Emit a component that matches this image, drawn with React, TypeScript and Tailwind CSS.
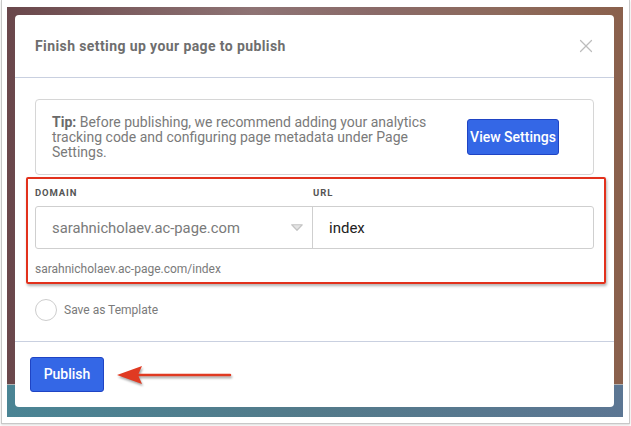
import { X } from 'lucide-react';

const font = { fontFamily: 'Roboto, "Liberation Sans", sans-serif' };

function Arrow() {
  return (
    <svg width="120" height="24" viewBox="0 0 120 24" className="drop-shadow-[1px_2px_1px_rgba(0,0,0,0.35)]">
      <path d="M14 12 L114 12" stroke="#e03a22" strokeWidth="2.5" strokeLinecap="round" />
      <path d="M1 12 L26 3 L22 12 L26 21 Z" fill="#e03a22" />
    </svg>
  );
}

export default function App() {
  return (
    <div className="h-[426px] w-[631px] overflow-hidden bg-white pl-[1px] pr-[1px]" style={font}>
      <div className="h-[424px] border-x border-b border-[#c8c8c8] px-[5px] pt-[7px] shadow-[0_1px_2px_rgba(0,0,0,0.15)]">
        <div className="relative h-[410px] w-[616px]">
          {/* page behind the dialog */}
          <div className="h-[377px] bg-[linear-gradient(90deg,#6a474b_0%,#7d5e60_20%,#8e7374_40%,#8a6a68_60%,#8d6a5c_80%,#8a604c_100%)]" />
          <div className="h-[1px] bg-[#b0b0b0]" />
          <div className="h-[32px] bg-[linear-gradient(90deg,#4a8494_0%,#537a8a_50%,#5c7693_100%)]" />

          {/* dialog */}
          <div className="absolute left-[8px] top-[8px] flex h-[392px] w-[599px] flex-col rounded-[4px] bg-white">
            <div className="flex h-[63px] items-center justify-between border-b border-[#c9d0e0] pl-[20px] pr-[17px]">
              <h1 className="text-[14px] font-bold tracking-[0.4px] text-[#6e6e6e]">Finish setting up your page to publish</h1>
              <X size={22} strokeWidth={1.3} color="#bdbdbd" />
            </div>

            <div className="flex-1 px-[20px] pt-[21px]">
              <div className="flex h-[76px] items-center justify-between rounded-[4px] border-[1.5px] border-[#d6d6d6] pl-[16px] pr-[34px]">
                <p className="text-[14px] leading-[15px] text-[#7a7a7a]">
                  <b className="font-bold text-[#6a6a6a]">Tip:</b> Before publishing, we recommend adding your analytics
                  <br />
                  tracking code and configuring page metadata under Page
                  <br />
                  Settings.
                </p>
                <button className="h-[36px] w-[92px] rounded-[3px] border-[1.5px] border-[#1f44c4] bg-[#3467e6] text-[14px] font-medium text-white">
                  View Settings
                </button>
              </div>

              <div className="relative mt-[11px] pb-[6px]">
                <div className="pointer-events-none absolute -left-[9px] -right-[12px] -top-[9px] bottom-0 rounded-[2px] border-[2.5px] border-[#e2311c] shadow-[1px_2px_3px_rgba(0,0,0,0.3)]" />
                <div className="flex text-[9.5px] font-bold tracking-[0.9px] text-[#555]">
                  <span className="w-[278px]">DOMAIN</span>
                  <span>URL</span>
                </div>
                <div className="mt-[6px] flex h-[43px] rounded-[3px] border-[1.5px] border-[#cfcfcf]">
                  <div className="flex w-[277px] items-center justify-between border-r-[1.5px] border-[#cfcfcf] pl-[16px] pr-[9px]">
                    <span className="text-[14.8px] text-[#7a7a7a]">sarahnicholaev.ac-page.com</span>
                    <svg width="12" height="7" viewBox="0 0 12 7">
                      <path d="M0.75 0.75 L11.25 0.75 L6 6.25 Z" fill="#e4e4e4" stroke="#c4c4c4" strokeWidth="1.2" strokeLinejoin="round" />
                    </svg>
                  </div>
                  <div className="flex flex-1 items-center pl-[16px] text-[15px] text-[#222]">index</div>
                </div>
                <div className="mt-[11px] text-[12px] text-[#7a7a7a]">sarahnicholaev.ac-page.com/index</div>
              </div>

              <label className="mt-[15px] flex items-center gap-[7px]">
                <span className="h-[22px] w-[22px] rounded-full border-[1.5px] border-[#cdcdcd]" />
                <span className="text-[12px] text-[#7a7a7a]">Save as Template</span>
              </label>
            </div>

            <div className="flex h-[66px] items-center gap-[12px] border-t border-[#c9d0e0] pl-[15px]">
              <button className="h-[35px] w-[74px] rounded-[3px] border-[1.5px] border-[#1f44c4] bg-[#3467e6] text-[14px] font-medium text-white">
                Publish
              </button>
              <Arrow />
            </div>
          </div>
        </div>
      </div>
    </div>
  );
}
